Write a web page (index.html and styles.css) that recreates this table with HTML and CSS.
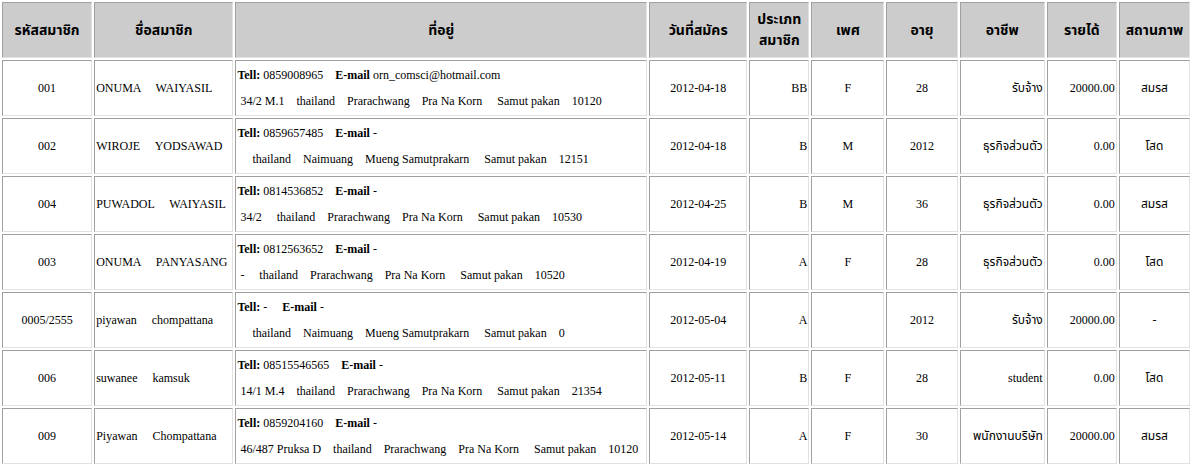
FILE: index.html
```html
<!DOCTYPE html>
<html lang="th">
<head>
<meta charset="utf-8">
<title>สมาชิก</title>
<link rel="stylesheet" href="styles.css">
</head>
<body>
<table class="members">
<colgroup>
<col class="c-id"><col class="c-name"><col class="c-addr"><col class="c-date"><col class="c-type"><col class="c-sex"><col class="c-age"><col class="c-job"><col class="c-inc"><col class="c-stat">
</colgroup>
<thead>
<tr>
<th>รหัสสมาชิก</th><th>ชื่อสมาชิก</th><th>ที่อยู่</th><th>วันที่สมัคร</th><th class="two">ประเภท<br>สมาชิก</th><th>เพศ</th><th>อายุ</th><th>อาชีพ</th><th>รายได้</th><th>สถานภาพ</th>
</tr>
</thead>
<tbody>
<tr>
<td class="ctr">001</td>
<td class="name">ONUMA     WAIYASIL</td>
<td class="addr"><div class="ln"><b>Tell:</b> 0859008965    <b>E-mail</b> orn_comsci@hotmail.com</div><div class="ln"> 34/2 M.1    thailand    Prarachwang    Pra Na Korn     Samut pakan    10120</div></td>
<td class="ctr">2012-04-18</td>
<td class="rt">BB</td>
<td class="ctr">F</td>
<td class="ctr">28</td>
<td class="rt th">รับจ้าง</td>
<td class="rt">20000.00</td>
<td class="ctr th">สมรส</td>
</tr>
<tr>
<td class="ctr">002</td>
<td class="name">WIROJE     YODSAWAD</td>
<td class="addr"><div class="ln"><b>Tell:</b> 0859657485    <b>E-mail</b> -</div><div class="ln">     thailand    Naimuang    Mueng Samutprakarn     Samut pakan    12151</div></td>
<td class="ctr">2012-04-18</td>
<td class="rt">B</td>
<td class="ctr">M</td>
<td class="ctr">2012</td>
<td class="rt th">ธุรกิจส่วนตัว</td>
<td class="rt">0.00</td>
<td class="ctr th">โสด</td>
</tr>
<tr>
<td class="ctr">004</td>
<td class="name">PUWADOL     WAIYASIL</td>
<td class="addr"><div class="ln"><b>Tell:</b> 0814536852    <b>E-mail</b> -</div><div class="ln"> 34/2     thailand    Prarachwang    Pra Na Korn     Samut pakan    10530</div></td>
<td class="ctr">2012-04-25</td>
<td class="rt">B</td>
<td class="ctr">M</td>
<td class="ctr">36</td>
<td class="rt th">ธุรกิจส่วนตัว</td>
<td class="rt">0.00</td>
<td class="ctr th">สมรส</td>
</tr>
<tr>
<td class="ctr">003</td>
<td class="name">ONUMA     PANYASANG</td>
<td class="addr"><div class="ln"><b>Tell:</b> 0812563652    <b>E-mail</b> -</div><div class="ln"> -     thailand    Prarachwang    Pra Na Korn     Samut pakan    10520</div></td>
<td class="ctr">2012-04-19</td>
<td class="rt">A</td>
<td class="ctr">F</td>
<td class="ctr">28</td>
<td class="rt th">ธุรกิจส่วนตัว</td>
<td class="rt">0.00</td>
<td class="ctr th">โสด</td>
</tr>
<tr>
<td class="ctr">0005/2555</td>
<td class="name">piyawan     chompattana</td>
<td class="addr"><div class="ln"><b>Tell:</b> -     <b>E-mail</b> -</div><div class="ln">     thailand    Naimuang    Mueng Samutprakarn     Samut pakan    0</div></td>
<td class="ctr">2012-05-04</td>
<td class="rt">A</td>
<td class="ctr"></td>
<td class="ctr">2012</td>
<td class="rt th">รับจ้าง</td>
<td class="rt">20000.00</td>
<td class="ctr">-</td>
</tr>
<tr>
<td class="ctr">006</td>
<td class="name">suwanee     kamsuk</td>
<td class="addr"><div class="ln"><b>Tell:</b> 08515546565    <b>E-mail</b> -</div><div class="ln"> 14/1 M.4    thailand    Prarachwang    Pra Na Korn     Samut pakan    21354</div></td>
<td class="ctr">2012-05-11</td>
<td class="rt">B</td>
<td class="ctr">F</td>
<td class="ctr">28</td>
<td class="rt">student</td>
<td class="rt">0.00</td>
<td class="ctr th">โสด</td>
</tr>
<tr>
<td class="ctr">009</td>
<td class="name">Piyawan     Chompattana</td>
<td class="addr"><div class="ln"><b>Tell:</b> 0859204160    <b>E-mail</b> -</div><div class="ln"> 46/487 Pruksa D    thailand    Prarachwang    Pra Na Korn     Samut pakan    10120</div></td>
<td class="ctr">2012-05-14</td>
<td class="rt">A</td>
<td class="ctr">F</td>
<td class="ctr">30</td>
<td class="rt th">พนักงานบริษัท</td>
<td class="rt">20000.00</td>
<td class="ctr th">สมรส</td>
</tr>
</tbody>
</table>
</body>
</html>
```
FILE: styles.css
```css
html, body {
  margin: 0;
  padding: 0;
  background: #ffffff;
}
body {
  font-family: "Liberation Serif", "Noto Sans Thai", Tahoma, serif;
  font-size: 12px;
  color: #000;
}
.members {
  table-layout: fixed;
  border-collapse: separate;
  border-spacing: 2px;
  width: 1192px;
  margin: 0;
}
.c-id { width: 90px; }
.c-name { width: 139px; }
.c-addr { width: 411px; }
.c-date { width: 98px; }
.c-type { width: 60px; }
.c-sex { width: 73px; }
.c-age { width: 71px; }
.c-job { width: 85px; }
.c-inc { width: 70px; }
.c-stat { width: 71px; }

.members th,
.members td {
  border-style: solid;
  border-width: 1px;
  border-color: #a0a0a0 #e2e2e2 #e2e2e2 #a0a0a0;
  padding: 0 1px;
  vertical-align: middle;
  overflow: hidden;
  white-space: nowrap;
}
.members th {
  background: #cccccc;
  height: 54px;
  font-size: 14px;
  font-weight: bold;
  text-align: center;
  line-height: 21px;
}
.members td {
  height: 54px;
}
.members td.ctr { text-align: center; }
.members td.rt { text-align: right; }
.members td.th { font-size: 12px; }
.members td.name {
  text-align: left;
  white-space: pre;
}
.members td.addr {
  text-align: left;
  white-space: pre;
}
.ln {
  line-height: 26px;
}
```
